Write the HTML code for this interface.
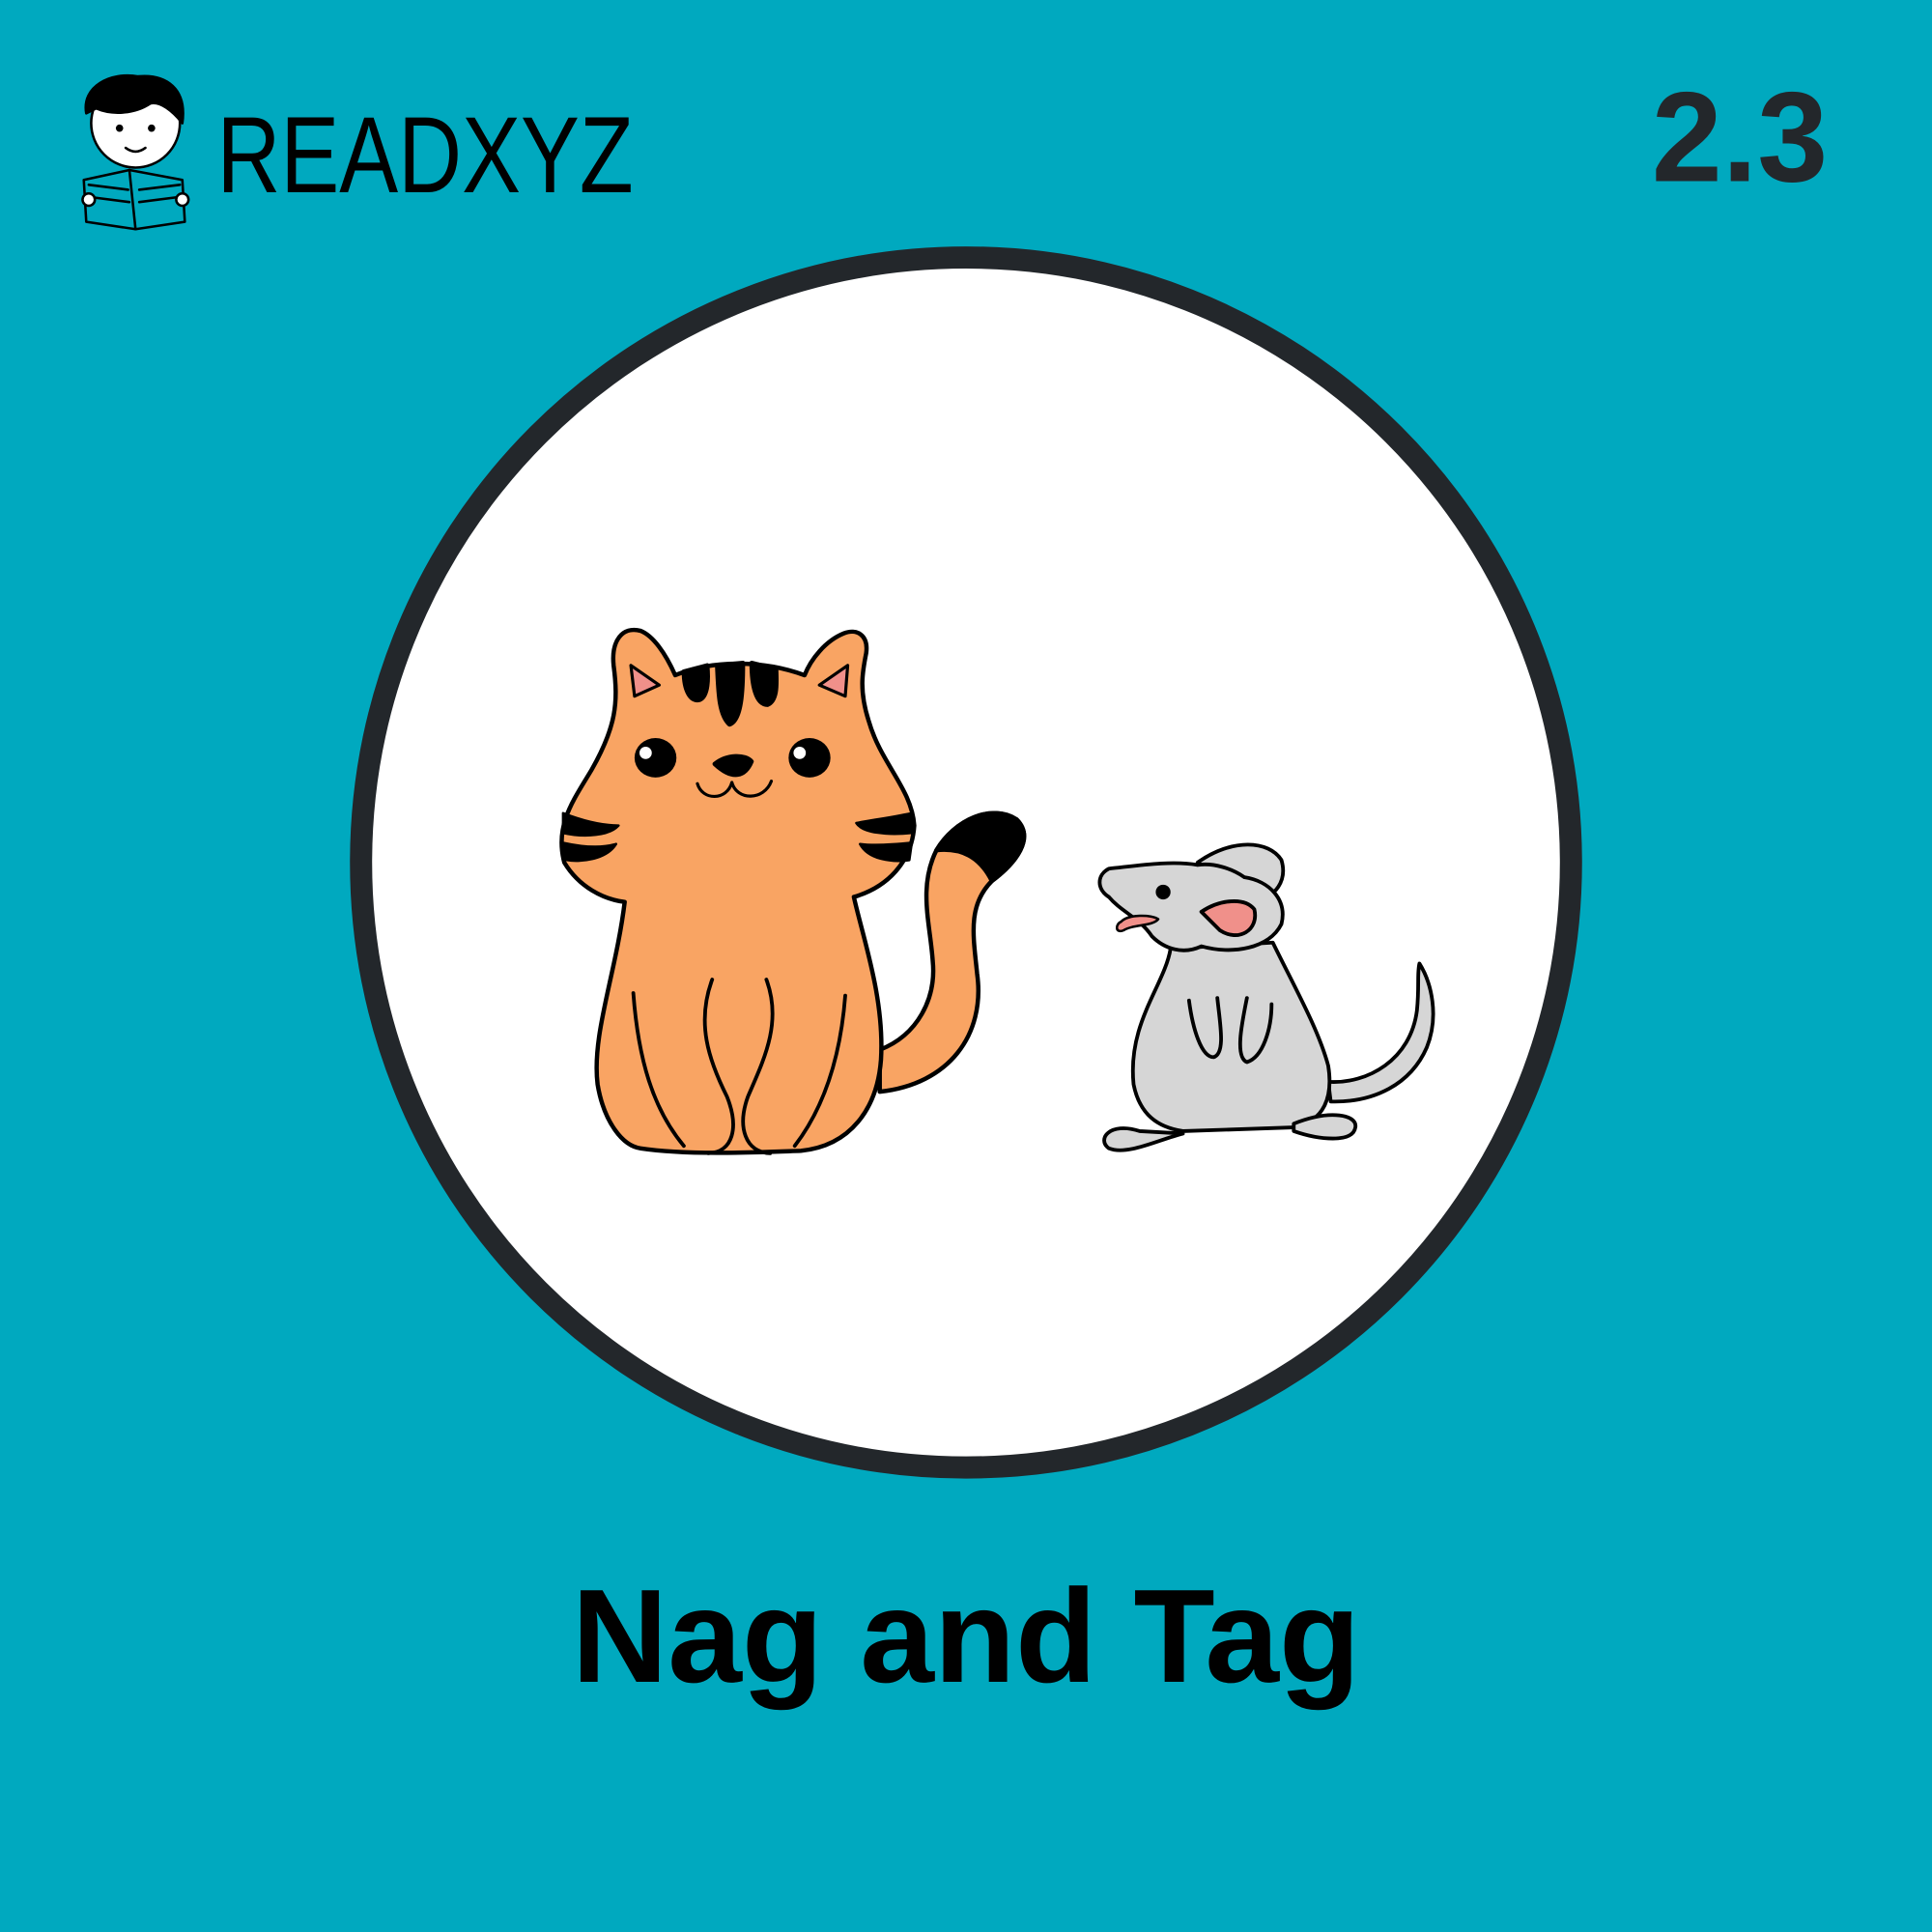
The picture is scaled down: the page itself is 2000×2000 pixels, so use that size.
<!DOCTYPE html>
<html><head><meta charset="utf-8"><style>
html,body{margin:0;padding:0;background:#00a9bf;}
svg{display:block}
</style></head><body>
<svg width="2000" height="2000" viewBox="0 0 1568 1568" xmlns="http://www.w3.org/2000/svg">
<rect width="1568" height="1568" fill="#00a9bf"/>
<!-- logo -->
<g stroke="#000" stroke-width="2" stroke-linejoin="round" stroke-linecap="round">
  <circle cx="110" cy="100" r="36" fill="#fff"/>
  <path d="M70,92 C66,70 90,58 112,62 C135,60 152,72 148,100 C140,90 130,82 122,84 C110,92 92,94 78,88 Z" fill="#000"/>
  <path d="M68,146 L105,138 L148,146 L150,180 L110,186 L70,180 Z" fill="#00a9bf"/>
  <path d="M105,138 L110,186 M72,150 L104,154 M74,160 L105,164 M146,150 L113,154 M144,160 L113,164" fill="none"/>
  <circle cx="72" cy="162" r="5" fill="#fff"/><circle cx="148" cy="162" r="5" fill="#fff"/>
  <path d="M102,120 Q110,126 118,120" fill="none"/>
</g>
<circle cx="97" cy="104" r="3" fill="#000"/><circle cx="123" cy="104" r="3" fill="#000"/>
<text x="176" y="156" font-family="Liberation Sans, sans-serif" font-size="88" fill="#000" textLength="338" lengthAdjust="spacingAndGlyphs">READXYZ</text>
<text x="1412" y="147" text-anchor="middle" font-family="Liberation Sans, sans-serif" font-weight="bold" font-size="104" fill="#23272b" textLength="143" lengthAdjust="spacingAndGlyphs">2.3</text>
<!-- circle -->
<circle cx="784" cy="700" r="491" fill="#fff" stroke="#23272b" stroke-width="18"/>
<!-- cat tail -->
<g stroke="#000" stroke-width="3.5" stroke-linejoin="round" stroke-linecap="round">
<path d="M714,852 C745,840 760,810 757,780 C755,750 745,720 760,690 C775,665 805,652 825,665 C840,680 825,700 805,715 C785,735 790,760 793,790 C800,840 770,880 714,886 Z" fill="#f9a463"/>
<path d="M760,690 C775,665 805,652 825,665 C840,680 825,700 805,715 C795,695 780,688 760,690 Z" fill="#000"/>
<path d="M520,512 C505,508 496,520 498,540 C502,570 500,590 480,625 C465,650 450,670 458,700 C470,720 490,730 507,732 C500,790 480,840 485,880 C490,910 505,930 520,932 C560,938 620,935 650,934 C690,930 712,900 715,860 C718,810 700,760 693,728 C720,720 740,700 742,670 C740,640 715,620 705,585 C697,560 700,545 703,530 C705,515 695,510 685,514 C670,520 658,535 653,548 C620,536 580,535 548,548 C540,530 530,516 520,512 Z" fill="#f9a463"/>
<path d="M512,540 L515,565 L535,556 Z M688,540 L686,565 L665,556 Z" fill="#f0908a" stroke-width="2.5"/>
<path d="M555,545 C555,560 560,570 568,568 C575,565 575,550 574,540 Z M582,540 C583,560 583,580 592,588 C602,585 603,560 603,538 Z M610,538 C610,555 613,572 623,572 C632,568 630,552 630,543 Z" fill="#000"/>
<path d="M457,660 C475,667 490,670 502,670 C495,678 475,680 457,676 Z M457,684 C475,688 490,688 500,685 C492,698 470,700 460,698 Z M740,660 C720,664 705,666 695,668 C700,676 720,678 740,676 Z M740,684 C720,686 705,686 698,685 C705,698 725,700 738,698 Z" fill="#000" stroke-width="2"/>
<path d="M514,806 C518,860 530,900 555,930 M578,795 C565,830 575,860 590,890 C600,915 595,935 575,936 M622,795 C635,830 620,860 607,890 C598,915 605,935 625,936 M686,808 C682,860 668,900 645,930" fill="none" stroke-width="3"/>
<path d="M566,636 C570,650 590,650 594,635 C598,650 620,650 626,634" fill="none" stroke-width="2.5"/>
<path d="M580,620 C590,612 605,612 610,618 C605,630 595,634 580,620 Z" fill="#000"/>
</g>
<ellipse cx="532" cy="615" rx="17" ry="16" fill="#000"/><circle cx="524" cy="611" r="5" fill="#fff"/>
<ellipse cx="657" cy="615" rx="17" ry="16" fill="#000"/><circle cx="649" cy="611" r="5" fill="#fff"/>
<!-- mouse -->
<g stroke="#000" stroke-width="3" stroke-linejoin="round" stroke-linecap="round" fill="#d6d6d6">
<path d="M1078,878 C1110,880 1145,860 1150,820 C1152,800 1150,790 1152,782 C1162,798 1168,825 1158,850 C1145,880 1115,895 1080,894 Z"/>
<path d="M950,770 C945,800 915,830 920,880 C925,905 940,915 960,918 L1050,915 C1075,910 1082,890 1078,865 C1070,835 1050,800 1033,765 Z"/>
<path d="M925,918 C900,910 890,925 900,932 C915,938 940,925 960,920 Z M1050,912 C1080,900 1102,905 1100,915 C1098,928 1070,925 1050,918 Z"/>
<path d="M972,700 C1000,680 1030,682 1040,698 C1045,715 1035,728 1020,730 Z"/>
<path d="M972,702 C950,698 920,703 900,705 C890,710 890,722 900,728 C910,740 925,745 935,760 C945,770 960,775 975,768 C1000,775 1030,770 1040,750 C1045,730 1030,715 1010,712 C1000,705 985,700 972,702 Z"/>
<path d="M975,740 C990,730 1010,728 1018,738 C1022,755 1005,765 990,755 Z" fill="#f0908a"/>
<path d="M910,748 C915,742 935,742 940,746 C935,752 920,750 912,755 C905,758 905,750 910,748 Z" fill="#f0908a" stroke-width="2"/>
<path d="M965,812 C968,835 975,858 985,858 C995,855 990,830 988,810 M1012,810 C1008,830 1002,858 1012,862 C1025,858 1032,835 1032,815" fill="none"/>
</g>
<circle cx="944" cy="724" r="6" fill="#000"/>
<text x="784" y="1365" text-anchor="middle" font-family="Liberation Sans, sans-serif" font-weight="bold" font-size="108" fill="#000">Nag and Tag</text>
</svg>
</body></html>
